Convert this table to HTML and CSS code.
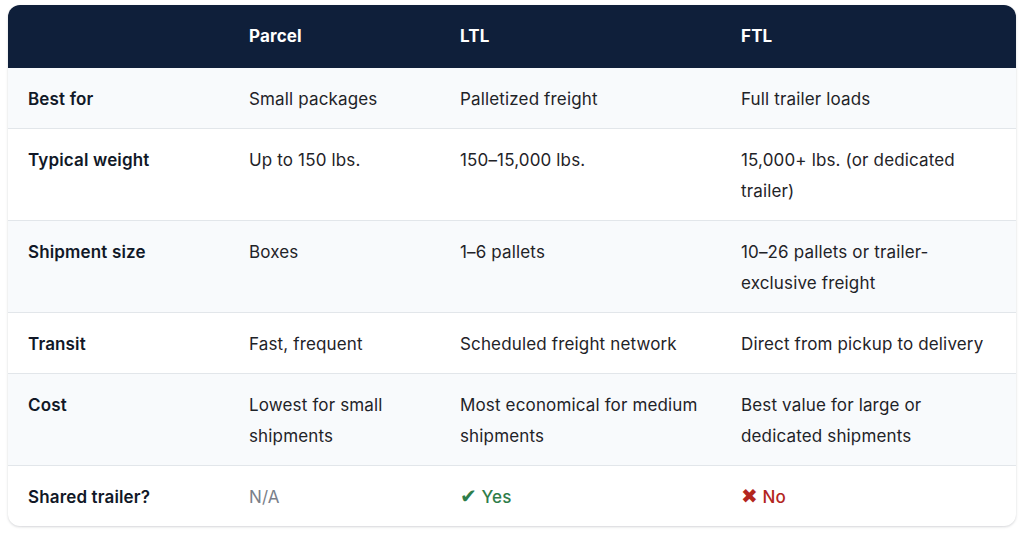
FILE: index.html
```html
<!DOCTYPE html>
<html lang="en">
<head>
<meta charset="utf-8">
<title>Parcel vs LTL vs FTL</title>
<link rel="stylesheet" href="styles.css">
</head>
<body>
<div class="wrap">
  <table class="cmp">
    <colgroup>
      <col class="c1"><col class="c2"><col class="c3"><col class="c4">
    </colgroup>
    <thead>
      <tr><th></th><th>Parcel</th><th>LTL</th><th>FTL</th></tr>
    </thead>
    <tbody>
      <tr><td class="lbl">Best for</td><td>Small packages</td><td>Palletized freight</td><td>Full trailer loads</td></tr>
      <tr><td class="lbl">Typical weight</td><td>Up to 150 lbs.</td><td>150–15,000 lbs.</td><td>15,000+ lbs. (or dedicated trailer)</td></tr>
      <tr><td class="lbl">Shipment size</td><td>Boxes</td><td>1–6 pallets</td><td>10–26 pallets or trailer-exclusive freight</td></tr>
      <tr><td class="lbl">Transit</td><td>Fast, frequent</td><td>Scheduled freight network</td><td>Direct from pickup to delivery</td></tr>
      <tr><td class="lbl">Cost</td><td>Lowest for small shipments</td><td>Most economical for medium shipments</td><td>Best value for large or dedicated shipments</td></tr>
      <tr><td class="lbl">Shared trailer?</td><td class="na">N/A</td><td class="yes"><span class="ico">✔</span> Yes</td><td class="no"><span class="ico">✖</span> No</td></tr>
    </tbody>
  </table>
</div>
</body>
</html>
```

FILE: styles.css
```css
html, body { margin: 0; padding: 0; background: #ffffff; }
body { font-family: Inter, "Noto Sans", "Liberation Sans", sans-serif; color: #1f2328; }
.wrap { padding: 5px 8px 8px 8px; }
.cmp {
  width: 1008px;
  border-collapse: separate;
  border-spacing: 0;
  table-layout: fixed;
  border-radius: 12px;
  overflow: hidden;
  box-shadow: 0 1px 3px rgba(15, 23, 42, 0.12), 0 1px 2px rgba(15, 23, 42, 0.06);
  font-size: 17px;
  line-height: 31px;
  letter-spacing: 0.15px;
}
.c1 { width: 221px; }
.c2 { width: 211px; }
.c3 { width: 281px; }
.c4 { width: 295px; }
.cmp th {
  background: #0f1f3a;
  color: #ffffff;
  font-weight: 700;
  text-align: left;
  padding: 16px 20px;
}
.cmp td {
  padding: 15.5px 20px 13.5px 20px;
  border-bottom: 1px solid #e2e6ea;
  vertical-align: top;
  color: #1f2328;
}
.cmp tbody tr:nth-child(odd) td { background: #f8fafc; }
.cmp tbody tr:last-child td { border-bottom: none; }
.cmp td.lbl { font-weight: 600; color: #111827; }
.cmp td.na { color: #7a808a; }
.cmp td.yes { color: #2e7d4a; font-weight: 500; }
.cmp td.no { color: #b3261e; font-weight: 500; }
.ico { font-family: "DejaVu Sans", sans-serif; font-size: 20px; line-height: 1; }
```
